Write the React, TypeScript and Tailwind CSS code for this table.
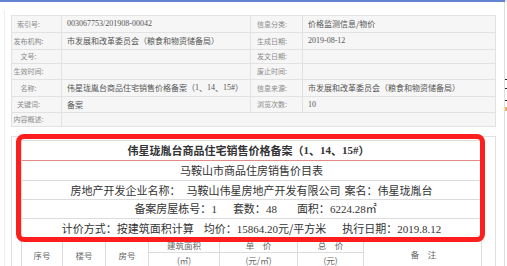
const serif = "font-['Liberation_Serif','Times_New_Roman',serif]";

const metaRows = [
  { h: 'h-[17px]', l: '索引号:', v: <span className={serif}>003067753/201908-00042</span>, rl: '信息分类:', rv: '价格监测信息/物价' },
  { h: 'h-[17px]', l: '发布机构:', v: '市发展和改革委员会（粮食和物资储备局）', rl: '生成日期:', rv: <span className={serif}>2019-08-12</span> },
  { h: 'h-[14px]', l: '文号:', v: '', rl: '发文日期:', rv: '' },
  { h: 'h-[16px]', l: '生效时间:', v: '', rl: '废止时间:', rv: '' },
  {
    h: 'h-[17px]',
    l: '名称:',
    v: (
      <>
        伟星珑胤台商品住宅销售价格备案（<span className={serif}>1</span>、<span className={serif}>14</span>、<span className={serif}>15#</span>）
      </>
    ),
    rl: '信息来源:',
    rv: '市发展和改革委员会（粮食和物资储备局）',
  },
  { h: 'h-[16px]', l: '关键词:', v: '备案', rl: '浏览次数:', rv: <span className={serif}>10</span> },
];

function MetaTable() {
  return (
    <div className="w-[485px] bg-[#f6f6f6] border border-[#e2e2e2] border-b-0">
      {metaRows.map((r) => (
        <div key={r.l} className={`flex ${r.h} border-b border-[#e2e2e2]`}>
          <div className="w-[50px] shrink-0 flex items-center justify-center pr-[16px] border-r border-[#e2e2e2] text-[7px] text-[#8a8a8a] whitespace-nowrap">
            {r.l}
          </div>
          <div className="w-[189px] shrink-0 flex items-center pl-[5px] border-r border-[#e2e2e2] text-[8px] text-[#555] whitespace-nowrap">
            {r.v}
          </div>
          <div className="w-[52px] shrink-0 flex items-center pl-[6px] border-r border-[#e2e2e2] text-[7px] text-[#8a8a8a] whitespace-nowrap">
            {r.rl}
          </div>
          <div className="flex-1 flex items-center pl-[5px] text-[8px] text-[#555] whitespace-nowrap">{r.rv}</div>
        </div>
      ))}
      <div className="flex h-[14px] border-b border-[#e2e2e2]">
        <div className="w-[50px] shrink-0 flex items-center justify-center pr-[16px] border-r border-[#e2e2e2] text-[7px] text-[#8a8a8a] whitespace-nowrap">
          内容概述:
        </div>
        <div className="flex-1" />
      </div>
    </div>
  );
}

function PriceTable() {
  return (
    <div className="w-[461px] border-l border-r border-t border-[#dcdcdc] text-[11px] text-[#333]">
      <div className="h-[20px] flex items-center justify-center border-b border-[#e08a8a] font-bold whitespace-nowrap pr-[6px]">
        伟星珑胤台商品住宅销售价格备案（<span className={serif}>1</span>、<span className={serif}>14</span>、<span className={serif}>15#</span>）
      </div>
      <div className="h-[20px] flex items-center justify-center border-b border-[#dcdcdc] whitespace-nowrap">
        马鞍山市商品住房销售价目表
      </div>
      <div className="h-[19px] flex items-center justify-center border-b border-[#dcdcdc] whitespace-nowrap">
        <span>房地产开发企业名称：</span>
        <span className="ml-[6px]">马鞍山伟星房地产开发有限公司</span>
        <span className="ml-[4px]">案名：伟星珑胤台</span>
      </div>
      <div className="h-[19px] flex items-center justify-center border-b border-[#dcdcdc] whitespace-nowrap pl-[8px]">
        <span>
          备案房屋栋号：<span className={serif}>1</span>
        </span>
        <span className="ml-[16px]">
          套数：<span className={serif}>48</span>
        </span>
        <span className="ml-[20px]">
          面积：<span className={serif}>6224.28</span>㎡
        </span>
      </div>
      <div className="h-[20px] flex items-center justify-center border-b border-[#dcdcdc] whitespace-nowrap">
        <span>计价方式：按建筑面积计算</span>
        <span className="ml-[10px]">
          均价：<span className={serif}>15864.20</span>元/平方米
        </span>
        <span className="ml-[16px]">
          执行日期：<span className={serif}>2019.8.12</span>
        </span>
      </div>
      <div className="grid grid-cols-[41px_43px_43px_71px_78px_66px_119px] grid-rows-[14px_15px_10px] text-[8.5px] text-[#666] whitespace-nowrap">
        <div className="row-span-3 flex items-center justify-center border-r border-[#dcdcdc] pb-[7px]">序号</div>
        <div className="row-span-3 flex items-center justify-center border-r border-[#dcdcdc] pb-[7px]">楼号</div>
        <div className="row-span-3 flex items-center justify-center border-r border-[#dcdcdc] pb-[7px]">房号</div>
        <div className="flex items-center justify-center border-r border-b border-[#dcdcdc]">建筑面积</div>
        <div className="flex items-center justify-center border-r border-b border-[#dcdcdc]">单　价</div>
        <div className="flex items-center justify-center border-r border-b border-[#dcdcdc]">总　价</div>
        <div className="row-span-3 flex items-center justify-center pb-[9px]">备　注</div>
        <div className="flex items-center justify-center border-r border-[#dcdcdc]">(㎡)</div>
        <div className="flex items-center justify-center border-r border-[#dcdcdc]">(元/㎡)</div>
        <div className="flex items-center justify-center border-r border-[#dcdcdc]">(元)</div>
      </div>
    </div>
  );
}

export default function App() {
  return (
    <div className="relative w-[507px] h-[266px] overflow-hidden bg-white font-['Noto_Sans_CJK_SC','Noto_Sans',sans-serif]">
      <div className="flex">
        <div className="w-[505px] h-[2px] bg-[#6384d2]" />
        <div className="w-[2px] h-[2px] bg-[#e6e6e6]" />
      </div>
      <div className="flex">
        <div className="w-[505px] h-[264px] border-r border-[#dedede]">
          <div className="ml-[4px] mt-[8px] h-[256px] border-l border-[#eeeeee] pt-[5px] pl-[6px]">
            <MetaTable />
            <div className="mt-[9px] w-[485px] h-[140px] border border-b-0 border-[#e0e0e0] pl-[9px] pt-[3px]">
              <PriceTable />
            </div>
          </div>
        </div>
        <div className="w-[2px] flex flex-col">
          <div className="mt-[77px] h-[1px] bg-[#222]" />
          <div className="mt-[8px] h-[1px] bg-[#222]" />
          <div className="mt-[11px] h-[1px] bg-[#222]" />
          <div className="mt-[6px] h-[4px] bg-[#f0b060]" />
        </div>
      </div>
      <div className="absolute left-[16px] top-[134px] w-[469px] h-[108px] border-[5px] border-[#ff1e1e] rounded-[8px]" />
    </div>
  );
}
